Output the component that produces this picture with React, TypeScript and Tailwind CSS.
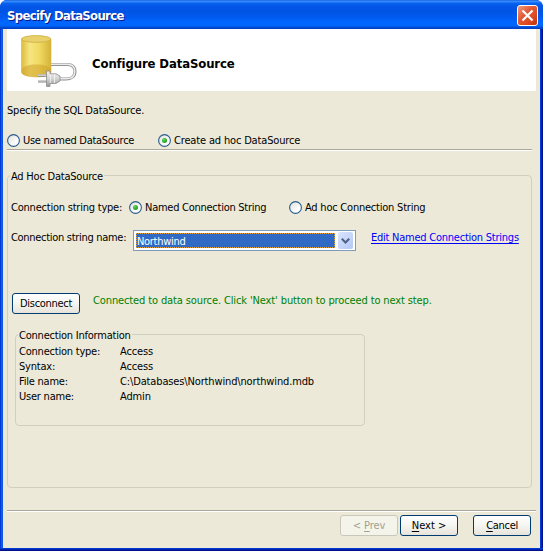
import React from "react";

function Radio({ checked = false }: { checked?: boolean }) {
  return (
    <svg width="13" height="13" viewBox="0 0 13 13" className="block shrink-0">
      <defs>
        <linearGradient id="radioFace" x1="0" y1="0" x2="1" y2="1">
          <stop offset="0" stopColor="#dcdcd6" />
          <stop offset="0.7" stopColor="#ffffff" />
        </linearGradient>
        <radialGradient id="radioDot" cx="0.35" cy="0.3" r="0.8">
          <stop offset="0" stopColor="#5fd65c" />
          <stop offset="1" stopColor="#1a9417" />
        </radialGradient>
      </defs>
      <circle cx="6.5" cy="6.5" r="5.9" fill="url(#radioFace)" stroke="#275b8d" strokeWidth="1.1" />
      {checked && <circle cx="6.5" cy="6.5" r="2.5" fill="url(#radioDot)" />}
    </svg>
  );
}

function Divider({ className = "" }: { className?: string }) {
  return <div className={`h-[2px] shrink-0 border-t border-t-[#aca899] bg-white ${className}`} />;
}

function Button({ hotkey, before = "", after = "", className, disabled = false }: {
  hotkey?: string; before?: string; after?: string; className: string; disabled?: boolean;
}) {
  const look = disabled
    ? "border-[#c9c7ba] bg-[#f5f4ea] text-[#a1a192]"
    : "border-[#003c74] bg-linear-to-b from-white via-[#f5f5f1] to-[#e6e3d9] text-black";
  return (
    <button className={`flex h-[21px] shrink-0 items-center justify-center rounded-[3px] border whitespace-pre ${look} ${className}`}>
      <span>{before}{hotkey && <span className="underline underline-offset-2">{hotkey}</span>}{after}</span>
    </button>
  );
}

function DataSourceIcon() {
  return (
    <svg width="56" height="54" viewBox="0 0 56 54" className="block">
      <defs>
        <linearGradient id="cylinder" x1="0" x2="1">
          <stop offset="0" stopColor="#dcbc3c" />
          <stop offset="0.28" stopColor="#f6e680" />
          <stop offset="0.6" stopColor="#f0da62" />
          <stop offset="1" stopColor="#d6b238" />
        </linearGradient>
        <linearGradient id="plug" x1="0" y1="0" x2="0" y2="1">
          <stop offset="0" stopColor="#f4f4f4" />
          <stop offset="0.5" stopColor="#d2d2d2" />
          <stop offset="1" stopColor="#989898" />
        </linearGradient>
      </defs>
      <path d="M0.5 4V37C1 43.5 30 43.5 30 37V4Z" fill="url(#cylinder)" stroke="#d5b53f" strokeWidth="0.6" />
      <path d="M0.5 35C1 27.5 30 27.5 30 35V37C30 43.5 1 43.5 0.5 37Z" fill="#cfa22c" opacity="0.55" />
      <ellipse cx="15.2" cy="4" rx="14.6" ry="3.4" fill="#e8d06a" stroke="#cfae3f" strokeWidth="0.8" />
      <path d="M30 29.5H46C52 29.5 54 32.5 54 36.5C54 41.5 50 44 45 44H38" fill="none" stroke="#929292" strokeWidth="3" />
      <path d="M30 29.3H46C52 29.3 53.8 32.5 53.8 36.5C53.8 41.5 50 43.8 45 43.8H38" fill="none" stroke="#ececec" strokeWidth="1.4" />
      <path d="M17 40.5H26M17 46.3H26" stroke="#858585" strokeWidth="2.6" />
      <path d="M17 40.1H26M17 45.9H26" stroke="#e6e6e6" strokeWidth="1.1" />
      <path d="M25.5 36H29V38.8H35L39 41V46L35 48.4H29V51.4H25.5Z" fill="url(#plug)" stroke="#8a8a8a" strokeWidth="0.8" />
      <path d="M29.3 39.2V48M33.5 39.2V48" stroke="#f7f7f7" strokeWidth="0.8" />
    </svg>
  );
}

function TitleBar() {
  return (
    <div className="flex h-[29px] shrink-0 items-start justify-between rounded-t-[7px] bg-[linear-gradient(to_bottom,#0852dc_0px,#3c93ff_1px,#2f83f6_2px,#0a64f0_3px,#0457e6_6px,#0054e3_12px,#005af0_17px,#0066ff_22px,#0065fb_26px,#0050d8_27px,#003dc0_29px)] pr-[5px] pl-[7px]">
      <span className="mt-[7px] text-[13px] leading-[18px] font-bold whitespace-nowrap tracking-[-0.68px] text-white [text-shadow:1px_1px_0_#0a1883]">Specify DataSource</span>
      <div className="mt-[5px] flex h-[21px] w-[21px] items-center justify-center rounded-[3px] border border-white bg-[linear-gradient(135deg,#f09a80_0%,#e25a36_40%,#dc4a22_70%,#b93208_100%)]">
        <svg width="13" height="13" viewBox="0 0 13 13"><path d="M1.5 1.5L11.5 11.5M11.5 1.5L1.5 11.5" stroke="#fff" strokeWidth="2.2" /></svg>
      </div>
    </div>
  );
}

const info = [
  { label: "Connection type:", value: "Access" },
  { label: "Syntax:", value: "Access" },
  { label: "File name:", value: "C:\\Databases\\Northwind\\northwind.mdb" },
  { label: "User name:", value: "Admin" },
];

export default function App() {
  return (
    <div className="h-[551px] w-[543px] overflow-hidden bg-white font-['DejaVu_Sans_Condensed','DejaVu_Sans',sans-serif] text-[11px] leading-[15px] whitespace-nowrap text-black [font-stretch:condensed]">
      <div className="flex h-full flex-col rounded-t-[7px] bg-[#0831d9]">
        <TitleBar />
        <div className="flex flex-1 flex-col bg-[linear-gradient(to_right,#0020c8_0px,#0855dd_1px,#166aee_2px,#0046e0_3px,#0046e0_540px,#0030c8_541px,#00138c_542px,#00108a_543px)] px-[3px]">
          <div className="flex flex-1 flex-col bg-[#ece9d8] pl-[4px]">
            <header className="flex h-[62px] w-[529px] shrink-0 items-center bg-white">
              <div className="mt-[3px] ml-[14px] w-[56px]"><DataSourceIcon /></div>
              <h1 className="ml-[15px] pt-[6px] text-[13px] font-bold tracking-[-0.12px]">Configure DataSource</h1>
            </header>
            <p className="mt-[12px] h-[15px] tracking-[-0.18px]">Specify the SQL DataSource.</p>
            <div className="mt-[15px] flex h-[15px] shrink-0 items-center">
              <Radio />
              <span className="ml-[3px] w-[135px] tracking-[-0.28px]">Use named DataSource</span>
              <Radio checked />
              <span className="ml-[3px] tracking-[-0.16px]">Create ad hoc DataSource</span>
            </div>
            <Divider className="mt-[1px] w-[525px]" />
            <section className="mt-[24px] flex h-[313px] w-[525px] shrink-0 flex-col rounded-[4px] border border-[#d0d0bf]">
              <h2 className="-mt-[7px] ml-[2px] h-[15px] self-start bg-[#ece9d8] px-px tracking-[-0.22px]">Ad Hoc DataSource</h2>
              <div className="mt-[16px] ml-[3px] flex h-[15px] items-center">
                <span className="w-[118px] tracking-[-0.22px]">Connection string type:</span>
                <Radio checked />
                <span className="ml-[3px] w-[144px] tracking-[-0.26px]">Named Connection String</span>
                <Radio />
                <span className="ml-[3px] tracking-[-0.22px]">Ad hoc Connection String</span>
              </div>
              <div className="mt-[15px] ml-[3px] flex h-[22px] items-start">
                <span className="w-[122px] tracking-[-0.3px]">Connection string name:</span>
                <div className="flex h-[21px] w-[223px] items-center border border-[#7f9db9] bg-white p-[2px]">
                  <span className="h-[15px] flex-1 border border-dotted border-[#e8a23a] bg-[#316ac5] leading-[15px] tracking-[-0.3px] text-white">Northwind</span>
                  <div className="ml-[3px] flex h-[17px] w-[15px] items-center justify-center rounded-[2px] bg-linear-to-br from-[#dbe5fd] to-[#b3c8f6]">
                    <svg width="9" height="6" viewBox="0 0 9 6"><path d="M0.8 0.8L4.5 4.5L8.2 0.8" fill="none" stroke="#4d6185" strokeWidth="2" /></svg>
                  </div>
                </div>
                <a className="ml-[15px] tracking-[-0.24px] text-[#0000ff] underline underline-offset-2">Edit Named Connection Strings</a>
              </div>
              <div className="mt-[41px] ml-[4px] flex h-[21px] items-start">
                <Button after="Disconnect" className="w-[68px] tracking-[-0.3px]" />
                <span className="ml-[13px] tracking-[-0.12px] text-[#008000]">Connected to data source. Click 'Next' button to proceed to next step.</span>
              </div>
              <section className="mt-[20px] ml-[7px] flex h-[92px] w-[350px] flex-col rounded-[4px] border border-[#d0d0bf]">
                <h3 className="-mt-[7px] ml-[2px] h-[15px] self-start bg-[#ece9d8] px-px tracking-[-0.22px]">Connection Information</h3>
                <dl className="mt-[1px] ml-[3px]">
                  {info.map((row) => (
                    <div key={row.label} className="flex h-[15px]">
                      <dt className="w-[101px] tracking-[-0.22px]">{row.label}</dt>
                      <dd className="tracking-[-0.14px]">{row.value}</dd>
                    </div>
                  ))}
                </dl>
              </section>
            </section>
            <Divider className="mt-[22px] w-[529px]" />
            <div className="mt-[3px] flex justify-end pr-[9px]">
              <Button before="< " hotkey="P" after="rev" disabled className="w-[58px] tracking-[-0.1px]" />
              <Button hotkey="N" after="ext >" className="ml-[2px] w-[58px]" />
              <Button hotkey="C" after="ancel" className="ml-[15px] w-[58px] tracking-[-0.3px]" />
            </div>
          </div>
        </div>
        <div className="h-[3px] shrink-0 bg-[linear-gradient(to_bottom,#0046e0_0px,#0030c8_1px,#00138c_2px)]" />
      </div>
    </div>
  );
}
